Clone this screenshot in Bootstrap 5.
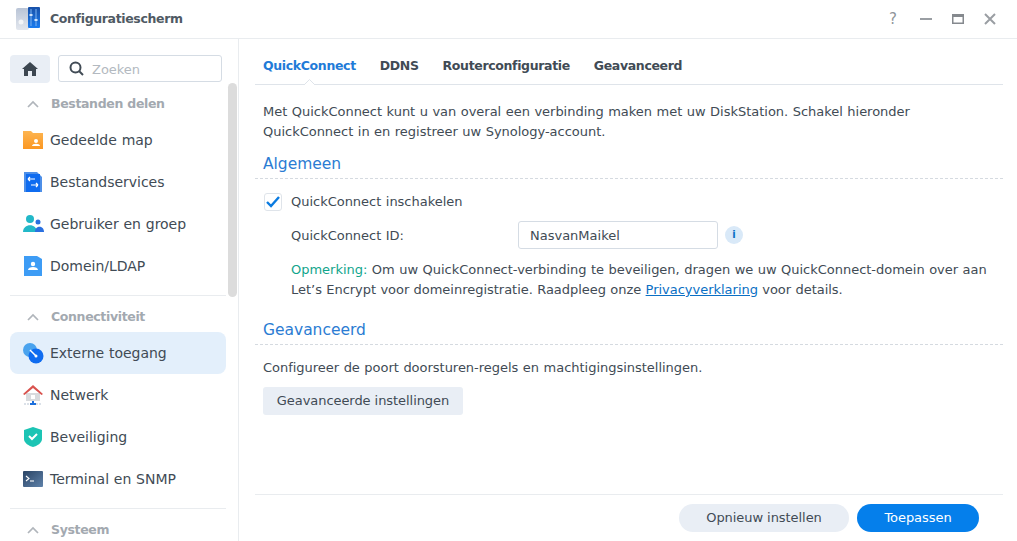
<!DOCTYPE html>
<html lang="nl">
<head>
    <meta charset="UTF-8">
    <meta name="viewport" content="width=device-width, initial-scale=1.0">
    <title>Configuratiescherm</title>
    <link href="https://cdn.jsdelivr.net/npm/bootstrap@5.3.0/dist/css/bootstrap.min.css" rel="stylesheet">
    <style>
        /* kleuren en maten van het venster */
        html, body { height: 100%; overflow: hidden; }
        body { font-family: "DejaVu Sans", sans-serif; font-size: 13px; line-height: 20px; color: #414b55; background: #fff; word-spacing: .4px; letter-spacing: -.02px; }
        .win-head { height: 39px; border-bottom: 1px solid #e9ecef; padding: 0 16px; }
        .win-title { font-size: 12.5px; letter-spacing: -.35px; font-weight: 700; color: #505a64; margin-left: 10px; }
        .win-tools { gap: 20px; margin-right: 5px; }
        .win-help { color: #8f9499; font-size: 15px; margin-right: 3px; }
        .win-body { height: 502px; }
        .side { width: 239px; border-right: 1px solid #e9ecef; padding: 16px 12px 0 10px; flex: none; overflow: hidden; position: relative; }
        .side-top { gap: 8px; height: 28px; }
        .home-btn { width: 40px; height: 28px; background: #e9eef5; border-radius: 4px; padding: 0; border: 0; }
        .search-box { width: 164px; height: 27px; border: 1px solid #d5dce4; border-radius: 3px; padding-left: 10px; color: #b3b9c0; gap: 8px; }
        .search-txt { padding-top: 2px; }
        .side-group { height: 26px; font-size: 12.5px; letter-spacing: -.35px; font-weight: 700; color: #a3a9b0; padding: 2px 0 0 17px; gap: 12px; margin-top: 7px; }
        .side-list { margin-top: 3px; width: 216px; }
        .side-item { height: 42px; font-size: 14px; padding-left: 12px; gap: 6px; border-radius: 8px; color: #414b55; }
        .side-item.on { background: #e3effb; }
        .side-ico { width: 22px; height: 22px; flex: none; }
        .side-sep { border-top: 1px solid #e9ecef; width: 216px; margin-top: 8px; }
        .side-bar { position: absolute; left: 228px; top: 44px; width: 9px; height: 214px; background: #dcdcdc; border-radius: 5px; }
        .main { padding: 0 14px 0 16px; }
        .tabs { height: 46px; border-bottom: 1px solid #dfe4ea; gap: 24px; padding: 9px 0 0 8px; position: relative; }
        .tab-link { font-weight: 700; color: #414b55; font-size: 12.5px; letter-spacing: -.35px; }
        .tab-link.on { color: #1f7bd8; }
        .tab-notch { position: absolute; left: 49px; bottom: -1px; width: 11px; height: 6px; }
        .pane { padding: 17px 0 0 8px; flex: 1; }
        .head-blue { font-size: 15.5px; color: #2b7cd3; border-bottom: 1px dashed #d5dae0; height: 26px; margin: 11px 0 0 -8px; padding-left: 8px; line-height: 22px; }
        .check-box { width: 18px; height: 18px; border: 1px solid #dfe4ea; border-radius: 3px; margin: 0 9px 0 1px; }
        .check-row { margin-top: 13px; height: 20px; }
        .id-row { margin-top: 9px; padding-left: 28px; height: 28px; }
        .id-label { width: 227px; padding-top: 2px; }
        .id-input { width: 200px; height: 28px; border: 1px solid #d5dce4; border-radius: 3px; font-size: 13px; color: #414b55; padding: 0 11px; font-family: inherit; }
        .id-input:focus { box-shadow: none; border-color: #d5dce4; }
        .info-dot { width: 18px; height: 18px; border-radius: 50%; background: #d9e9f8; color: #0a6fc4; font-size: 10px; font-weight: 700; margin-left: 7px; line-height: 18px; text-align: center; }
        .note { padding-left: 28px; margin-top: 11px; }
        .note-key { color: #12a58c; }
        .note-tail { word-spacing: .2px; }
        .note a { color: #0a6fc4; }
        .config-line { margin: 13px 0 9px; }
        .plain-btn { background: #e9eef5; color: #414b55; font-size: 13px; height: 28px; width: 200px; padding: 0; border: 0; border-radius: 3px; line-height: 28px; letter-spacing: -.06px; }
        .foot { height: 47px; border-top: 1px solid #e9ecef; gap: 8px; padding: 9px 24px 0 0; }
        .pill-btn { height: 28px; border-radius: 14px; font-size: 13px; padding: 0; border: 0; line-height: 28px; letter-spacing: -.06px; }
        .pill-grey { width: 170px; background: #e9eef5; color: #414b55; }
        .pill-blue { width: 122px; background: #057feb; color: #fff; }
    </style>
</head>
<body>
    <!-- titelbalk -->
    <div class="win-head d-flex align-items-center">
        <svg width="24" height="24" viewBox="0 0 24 24">
            <defs>
                <linearGradient id="gGrey" x1="0" y1="0" x2="0" y2="1"><stop offset="0" stop-color="#b9c4d6"/><stop offset="1" stop-color="#e3e7ee"/></linearGradient>
                <linearGradient id="gBlue" x1="0" y1="0" x2="0" y2="1"><stop offset="0" stop-color="#1750a8"/><stop offset="1" stop-color="#1b7cf0"/></linearGradient>
            </defs>
            <rect x="0" y="1" width="13" height="22" rx="2" fill="url(#gGrey)"/>
            <circle cx="5" cy="15" r="2.5" fill="#f3f5f8"/>
            <rect x="12" y="0" width="12" height="21" rx="1" fill="url(#gBlue)"/>
            <path d="M15 2v17M20 2v17" stroke="#7db4f2" stroke-width="1"/>
            <rect x="13.500" y="7" width="3" height="2" fill="#cfe3fb"/>
            <rect x="18.500" y="12" width="3" height="2" fill="#cfe3fb"/>
        </svg>
        <span class="win-title">Configuratiescherm</span>
        <div class="win-tools d-flex align-items-center ms-auto">
            <span class="win-help">?</span>
            <svg width="12" height="12" viewBox="0 0 12 12"><path d="M0 6h12" stroke="#9a9ea3" stroke-width="2"/></svg>
            <svg width="12" height="12" viewBox="0 0 12 12"><rect x=".75" y="1.750" width="10.500" height="8.500" fill="none" stroke="#85898e" stroke-width="1.500"/><rect x="0" y="1" width="12" height="3" fill="#85898e"/></svg>
            <svg width="12" height="12" viewBox="0 0 12 12"><path d="M1 1l10 10M11 1L1 11" stroke="#9a9ea3" stroke-width="2"/></svg>
        </div>
    </div>

    <div class="win-body d-flex">
        <!-- zijbalk -->
        <div class="side">
            <div class="side-top d-flex">
                <button class="home-btn d-flex align-items-center justify-content-center">
                    <svg width="16" height="14" viewBox="0 0 16 14"><path d="M8 0L0 7h2v7h4V9h4v5h4V7h2z" fill="#3c4650"/></svg>
                </button>
                <div class="search-box d-flex align-items-center">
                    <svg width="15" height="15" viewBox="0 0 15 15"><circle cx="6.500" cy="6.500" r="5" fill="none" stroke="#414b55" stroke-width="2"/><path d="M10 10l4 4" stroke="#414b55" stroke-width="2"/></svg>
                    <span class="search-txt">Zoeken</span>
                </div>
            </div>
            <div class="side-group d-flex align-items-center">
                <svg width="12" height="8" viewBox="0 0 12 8"><path d="M1 7l5-5 5 5" fill="none" stroke="#b0b5bb" stroke-width="1.7"/></svg>
                <span>Bestanden delen</span>
            </div>
            <div class="side-list">
                <div class="side-item d-flex align-items-center">
                    <svg class="side-ico" viewBox="0 0 22 22"><defs><linearGradient id="gFold" x1="0" y1="0" x2="0" y2="1"><stop offset="0" stop-color="#fdb551"/><stop offset="1" stop-color="#fb9722"/></linearGradient></defs><path d="M1 2h8l2 2h10v16H1z" fill="url(#gFold)"/><circle cx="14" cy="12" r="2" fill="#fff"/><path d="M10 17c0-3 8-3 8 0z" fill="#fff"/></svg>
                    <span>Gedeelde map</span>
                </div>
                <div class="side-item d-flex align-items-center">
                    <svg class="side-ico" viewBox="0 0 22 22"><path d="M2 1h13l5 5v15H2z" fill="#4d8fe8"/><path d="M4 3h14v18H4z" fill="#0f6cf0"/><path d="M6 8h7M6 8l2-2M6 8l2 2M16 14H9M16 14l-2-2M16 14l-2 2" stroke="#fff" stroke-width="1.2" fill="none"/></svg>
                    <span>Bestandservices</span>
                </div>
                <div class="side-item d-flex align-items-center">
                    <svg class="side-ico" viewBox="0 0 22 22"><circle cx="8" cy="6" r="4" fill="#22b8c8"/><path d="M1 19c0-9 14-9 14 0z" fill="#22b8c8"/><circle cx="16" cy="9" r="2.500" fill="#2a70e0"/><path d="M13 19c0-7 9-7 9 0z" fill="#2a70e0"/></svg>
                    <span>Gebruiker en groep</span>
                </div>
                <div class="side-item d-flex align-items-center">
                    <svg class="side-ico" viewBox="0 0 22 22"><path d="M2 1h13l5 3v17H2z" fill="#3d9cf5"/><circle cx="11" cy="9" r="2.200" fill="#fff"/><path d="M6 15c0-4 10-4 10 0z" fill="#fff"/></svg>
                    <span>Domein/LDAP</span>
                </div>
            </div>
            <div class="side-sep"></div>
            <div class="side-group d-flex align-items-center">
                <svg width="12" height="8" viewBox="0 0 12 8"><path d="M1 7l5-5 5 5" fill="none" stroke="#b0b5bb" stroke-width="1.7"/></svg>
                <span>Connectiviteit</span>
            </div>
            <div class="side-list">
                <div class="side-item on d-flex align-items-center">
                    <svg class="side-ico" viewBox="0 0 22 22"><circle cx="8" cy="8" r="7" fill="#4aa3ee"/><circle cx="14" cy="14" r="7.500" fill="#0f6cf0"/><path d="M8 8l6 6" stroke="#fff" stroke-width="1.500"/><circle cx="14" cy="14" r="1.500" fill="#fff"/></svg>
                    <span>Externe toegang</span>
                </div>
                <div class="side-item d-flex align-items-center">
                    <svg class="side-ico" viewBox="0 0 22 22"><path d="M4 9h14v8H4z" fill="#d8dadd"/><path d="M11 1L1 10l1.500 1L11 4l8.500 7L21 10z" fill="#d9534f"/><rect x="9" y="11" width="4" height="4" fill="#fff"/><path d="M2 20h18" stroke="#b7c3d2" stroke-dasharray="2 1"/><path d="M11 17v3" stroke="#1c6fdc" stroke-width="2"/><rect x="8" y="19" width="6" height="2" fill="#1c6fdc"/></svg>
                    <span>Netwerk</span>
                </div>
                <div class="side-item d-flex align-items-center">
                    <svg class="side-ico" viewBox="0 0 22 22"><path d="M11 1l9 3v9c0 4-5 7-9 8-4-1-9-4-9-8V4z" fill="#1cc4b4"/><path d="M7 10l3 3 5-5" fill="none" stroke="#fff" stroke-width="2"/></svg>
                    <span>Beveiliging</span>
                </div>
                <div class="side-item d-flex align-items-center">
                    <svg class="side-ico" viewBox="0 0 22 22"><defs><linearGradient id="gTerm" x1="0" y1="0" x2="1" y2="1"><stop offset="0" stop-color="#2a4464"/><stop offset="1" stop-color="#5f82aa"/></linearGradient></defs><rect x="1" y="3" width="20" height="16" rx="1" fill="url(#gTerm)"/><path d="M4 8l3 2.500-3 2.500" fill="none" stroke="#fff" stroke-width="1.100"/><path d="M8 13h4" stroke="#fff" stroke-width="1.100"/></svg>
                    <span>Terminal en SNMP</span>
                </div>
            </div>
            <div class="side-sep"></div>
            <div class="side-group d-flex align-items-center">
                <svg width="12" height="8" viewBox="0 0 12 8"><path d="M1 7l5-5 5 5" fill="none" stroke="#b0b5bb" stroke-width="1.7"/></svg>
                <span>Systeem</span>
            </div>
            <div class="side-bar"></div>
        </div>

        <!-- hoofdvenster -->
        <div class="main d-flex flex-column flex-grow-1">
            <div class="tabs d-flex align-items-center">
                <a class="tab-link on text-decoration-none">QuickConnect</a>
                <a class="tab-link text-decoration-none">DDNS</a>
                <a class="tab-link text-decoration-none">Routerconfiguratie</a>
                <a class="tab-link text-decoration-none">Geavanceerd</a>
                <svg class="tab-notch" viewBox="0 0 11 6"><path d="M0 6l5.500-5.500L11 6" fill="#fff" stroke="#dfe4ea"/></svg>
            </div>
            <div class="pane">
                <div>Met QuickConnect kunt u van overal een verbinding maken met uw DiskStation. Schakel hieronder<br>QuickConnect in en registreer uw Synology-account.</div>
                <div class="head-blue">Algemeen</div>
                <div class="check-row d-flex align-items-center">
                    <span class="check-box d-flex align-items-center justify-content-center">
                        <svg width="14" height="12" viewBox="0 0 14 12"><path d="M1 6l4 4 8-9" fill="none" stroke="#0a7be0" stroke-width="2.400"/></svg>
                    </span>
                    <span>QuickConnect inschakelen</span>
                </div>
                <div class="id-row d-flex align-items-center">
                    <span class="id-label">QuickConnect ID:</span>
                    <input class="form-control id-input" type="text" value="NasvanMaikel">
                    <span class="info-dot">i</span>
                </div>
                <div class="note">
                    <span class="note-key">Opmerking:</span> Om uw QuickConnect-verbinding te beveiligen, dragen we uw QuickConnect-domein over aan<br><span class="note-tail">Let’s Encrypt voor domeinregistratie. Raadpleeg onze <a href="#">Privacyverklaring</a> voor details.</span>
                </div>
                <div class="head-blue" style="margin-top:19px">Geavanceerd</div>
                <div class="config-line">Configureer de poort doorsturen-regels en machtigingsinstellingen.</div>
                <button class="btn plain-btn">Geavanceerde instellingen</button>
            </div>
            <div class="foot d-flex justify-content-end">
                <button class="btn pill-btn pill-grey">Opnieuw instellen</button>
                <button class="btn pill-btn pill-blue">Toepassen</button>
            </div>
        </div>
    </div>
    <script src="https://cdn.jsdelivr.net/npm/bootstrap@5.3.0/dist/js/bootstrap.bundle.min.js"></script>
</body>
</html>
